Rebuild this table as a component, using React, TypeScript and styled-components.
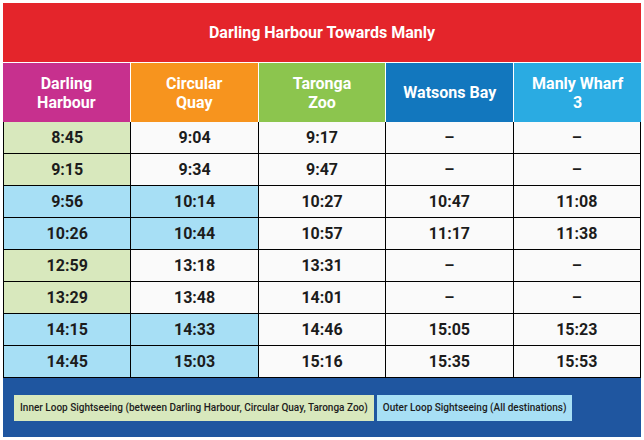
import React from "react";
import styled, { createGlobalStyle } from "styled-components";

const GlobalStyle = createGlobalStyle`
  body {
    margin: 0;
    background: #ffffff;
    font-family: Roboto, "Liberation Sans", Arial, sans-serif;
  }
`;

type Tone = "inner" | "outer" | "plain";

const columns = [
  { name: "Darling\nHarbour", color: "#c7308e" },
  { name: "Circular\nQuay", color: "#f7941e" },
  { name: "Taronga\nZoo", color: "#8cc54e" },
  { name: "Watsons Bay", color: "#1277be" },
  { name: "Manly Wharf\n3", color: "#2aabe2" },
];

// each row: times per stop, and how many leading cells are tinted
const rows: { times: string[]; tone: Tone; tinted: number }[] = [
  { times: ["8:45", "9:04", "9:17", "–", "–"], tone: "inner", tinted: 1 },
  { times: ["9:15", "9:34", "9:47", "–", "–"], tone: "inner", tinted: 1 },
  { times: ["9:56", "10:14", "10:27", "10:47", "11:08"], tone: "outer", tinted: 2 },
  { times: ["10:26", "10:44", "10:57", "11:17", "11:38"], tone: "outer", tinted: 2 },
  { times: ["12:59", "13:18", "13:31", "–", "–"], tone: "inner", tinted: 1 },
  { times: ["13:29", "13:48", "14:01", "–", "–"], tone: "inner", tinted: 1 },
  { times: ["14:15", "14:33", "14:46", "15:05", "15:23"], tone: "outer", tinted: 2 },
  { times: ["14:45", "15:03", "15:16", "15:35", "15:53"], tone: "outer", tinted: 2 },
];

const toneColor: Record<Tone, string> = {
  inner: "#d8e8bd",
  outer: "#a7dff5",
  plain: "#fafafa",
};

const App = () => {
  return (
    <>
      <GlobalStyle />
      <Board>
        <Title>Darling Harbour Towards Manly</Title>
        <HeadRow>
          {columns.map((c) => (
            <HeadCell key={c.name} $bg={c.color}>
              {c.name}
            </HeadCell>
          ))}
        </HeadRow>
        <Body>
          {rows.map((r, i) =>
            r.times.map((t, j) => (
              <Cell key={i + "-" + j} $bg={toneColor[j < r.tinted ? r.tone : "plain"]}>
                {t}
              </Cell>
            ))
          )}
        </Body>
        <Legend>
          <Key $bg={toneColor.inner}>
            Inner Loop Sightseeing (between Darling Harbour, Circular Quay, Taronga Zoo)
          </Key>
          <Key $bg={toneColor.outer}>Outer Loop Sightseeing (All destinations)</Key>
        </Legend>
      </Board>
    </>
  );
};

const Board = styled.div`
  width: 638px;
  margin: 3px 0 0 3px;
  display: flex;
  flex-direction: column;
`;

const Title = styled.div`
  height: 59px;
  background: #e4252b;
  color: #fff;
  font-size: 16px;
  font-weight: 700;
  display: flex;
  align-items: center;
  justify-content: center;
`;

const HeadRow = styled.div`
  display: grid;
  grid-template-columns: repeat(5, 1fr);
  gap: 1px;
  padding-top: 1px;
  background: #fff;
`;

const HeadCell = styled.div<{ $bg: string }>`
  height: 59px;
  background: ${(p) => p.$bg};
  color: #fff;
  font-size: 16px;
  font-weight: 700;
  line-height: 19px;
  white-space: pre-line;
  text-align: center;
  display: flex;
  align-items: center;
  justify-content: center;
`;

const Body = styled.div`
  display: grid;
  grid-template-columns: repeat(5, 1fr);
  border-left: 1px solid #000;
`;

const Cell = styled.div<{ $bg: string }>`
  height: 31px;
  background: ${(p) => p.$bg};
  border-right: 1px solid #000;
  border-bottom: 1px solid #000;
  color: #1c1c1c;
  font-size: 16px;
  font-weight: 700;
  display: flex;
  align-items: center;
  justify-content: center;
`;

const Legend = styled.div`
  height: 59px;
  background: #1f56a0;
  display: flex;
  align-items: center;
  gap: 3px;
  padding: 0 11px;
`;

const Key = styled.div<{ $bg: string }>`
  height: 26px;
  background: ${(p) => p.$bg};
  padding: 0 6px;
  color: #1c1c1c;
  font-size: 10px;
  font-weight: 500;
  display: flex;
  align-items: center;
`;

export default App;
